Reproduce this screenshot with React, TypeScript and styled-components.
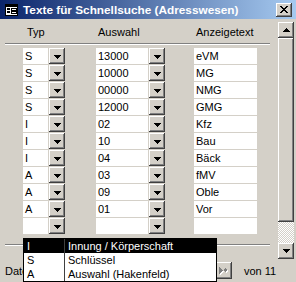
import React from 'react';
import styled, { createGlobalStyle } from 'styled-components';

const GlobalStyle = createGlobalStyle`
  html, body {
    margin: 0;
    padding: 0;
    background: #d4d0c8;
  }
  body {
    font-family: "Liberation Sans", Arial, sans-serif;
    font-size: 11px;
    overflow: hidden;
  }
`;

const Window = styled.div`
  position: relative;
  width: 296px;
  height: 282px;
  background: #d4d0c8;
  display: flex;
  flex-direction: column;
  overflow: hidden;
  color: #000;
`;

const TitleBar = styled.div`
  height: 19px;
  flex: none;
  display: flex;
  align-items: center;
  padding: 0 4px 0 5px;
  background: linear-gradient(to right, #0a246a, #a6caf0);
`;

const Title = styled.div`
  flex: 1;
  margin-left: 5px;
  color: #fff;
  font-weight: bold;
  font-size: 11.8px;
  white-space: nowrap;
`;

const raised = `
  background: #d4d0c8;
  box-shadow: inset -1px -1px #404040, inset 1px 1px #fff, inset -2px -2px #808080;
`;

const CloseButton = styled.div`
  ${raised}
  width: 16px;
  height: 14px;
  display: flex;
  align-items: center;
  justify-content: center;
`;

const Body = styled.div`
  flex: 1;
  display: flex;
  min-height: 0;
`;

const FormArea = styled.div`
  flex: 1;
  display: flex;
  flex-direction: column;
  padding: 0 8px 0 5px;
`;

const ColumnGrid = styled.div`
  display: grid;
  grid-template-columns: 73px 98px 61px;
  margin-left: 18px;
`;

const HeaderGrid = styled(ColumnGrid)`
  padding-top: 7px;
`;

const HeaderLabel = styled.div<{ $indent: number }>`
  line-height: 13px;
  padding-left: ${p => p.$indent}px;
`;

const Rule = styled.div<{ $gap: number }>`
  height: 0;
  margin-top: ${p => p.$gap}px;
  border-top: 1px solid #808080;
  border-bottom: 1px solid #fff;
`;

const RowsGrid = styled(ColumnGrid)`
  margin-top: 3px;
  grid-auto-rows: 16px;
  row-gap: 1px;
`;

const Combo = styled.div<{ $width: number }>`
  width: ${p => p.$width}px;
  display: flex;
  gap: 1px;
`;

const Field = styled.div<{ $width?: number }>`
  flex: 1;
  width: ${p => (p.$width ? `${p.$width}px` : 'auto')};
  background: #fff;
  padding-left: 2px;
  line-height: 16px;
  white-space: nowrap;
  overflow: hidden;
`;

const DropButton = styled.div`
  ${raised}
  width: 16px;
  height: 16px;
  display: flex;
  align-items: center;
  justify-content: center;
  padding-top: 2px;
  box-sizing: border-box;
`;

const ScrollBar = styled.div`
  width: 16px;
  margin: 3px 2px 0 0;
  height: 237px;
  display: flex;
  flex-direction: column;
`;

const ScrollButton = styled.div`
  ${raised}
  height: 16px;
  flex: none;
  display: flex;
  align-items: center;
  justify-content: center;
`;

const Thumb = styled.div`
  ${raised}
  height: 184px;
  flex: none;
`;

const Track = styled.div`
  flex: 1;
  background: repeating-conic-gradient(#d4d0c8 0% 25%, #fff 0% 50%) 0 0 / 2px 2px;
`;

const NavBar = styled.div`
  height: 23px;
  flex: none;
  display: flex;
  align-items: center;
  padding-left: 5px;
`;

const NavLabel = styled.div`
  width: 53px;
  white-space: nowrap;
`;

const NavButton = styled.div`
  ${raised}
  width: 16px;
  height: 17px;
  display: flex;
  align-items: center;
  justify-content: center;
`;

const RecordInput = styled.div`
  width: 94px;
  height: 17px;
  background: #fff;
  box-sizing: border-box;
  box-shadow: inset 1px 1px #808080, inset -1px -1px #fff;
  line-height: 17px;
  padding-left: 4px;
`;

const RecordCount = styled.div`
  margin-left: 12px;
  white-space: nowrap;
`;

const Popup = styled.div`
  position: absolute;
  left: 23px;
  top: 238px;
  width: 192px;
  border: 1px solid #000;
  background: #fff;
`;

const PopupRow = styled.div<{ $selected?: boolean }>`
  display: grid;
  grid-template-columns: 41px 1fr;
  height: 14px;
  line-height: 14px;
  background: ${p => (p.$selected ? '#000' : '#fff')};
  color: ${p => (p.$selected ? '#fff' : '#000')};
`;

const PopupCell = styled.div<{ $divider?: boolean }>`
  padding-left: 3px;
  white-space: nowrap;
  border-right: ${p => (p.$divider ? '1px solid #404040' : 'none')};
`;

const ArrowDown = () => (
  <svg width="7" height="4" viewBox="0 0 7 4" shapeRendering="crispEdges">
    <rect x="0" y="0" width="7" height="1" fill="#000" />
    <rect x="1" y="1" width="5" height="1" fill="#000" />
    <rect x="2" y="2" width="3" height="1" fill="#000" />
    <rect x="3" y="3" width="1" height="1" fill="#000" />
  </svg>
);

const ArrowUp = () => (
  <svg width="7" height="4" viewBox="0 0 7 4" shapeRendering="crispEdges">
    <rect x="3" y="0" width="1" height="1" fill="#000" />
    <rect x="2" y="1" width="3" height="1" fill="#000" />
    <rect x="1" y="2" width="5" height="1" fill="#000" />
    <rect x="0" y="3" width="7" height="1" fill="#000" />
  </svg>
);

const FormIcon = () => (
  <svg width="13" height="12" viewBox="0 0 13 12" shapeRendering="crispEdges">
    <rect x="0.5" y="0.5" width="12" height="11" fill="#fff" stroke="#000" />
    <rect x="1" y="1" width="11" height="2" fill="#000" />
    <rect x="2" y="4" width="3" height="2" fill="#000" />
    <rect x="6" y="4" width="5" height="2" fill="none" stroke="#000" strokeWidth="1" />
    <rect x="2" y="7" width="3" height="2" fill="#000" />
    <rect x="6" y="7" width="5" height="2" fill="none" stroke="#000" strokeWidth="1" />
  </svg>
);

const CloseGlyph = () => (
  <svg width="8" height="7" viewBox="0 0 8 7" shapeRendering="crispEdges">
    <path d="M0 0h2v1h1v1h2v-1h1v-1h2v1h-1v1h-1v1h-1v1h1v1h1v1h1v1h-2v-1h-1v-1h-2v1h-1v1h-2v-1h1v-1h1v-1h1v-1h-1v-1h-1v-1h-1z" fill="#000" />
  </svg>
);

const LastGlyph = () => (
  <svg width="8" height="7" viewBox="0 0 8 7" shapeRendering="crispEdges">
    <path d="M1 0v7l4-3.5z" fill="#000" />
    <rect x="6" y="0" width="1" height="7" fill="#000" />
  </svg>
);

const NewGlyph = () => (
  <svg width="12" height="8" viewBox="0 0 12 8" shapeRendering="crispEdges">
    <path d="M2 1v7l4-3.5z" fill="#fff" />
    <path d="M8 3h1M7 4h3M8 5h1M8 2v4M7 3l3 2M10 3l-3 2" stroke="#fff" strokeWidth="1" />
    <path d="M1 0v7l4-3.5z" fill="#808080" />
    <path d="M7 2h1M6 3h3M7 4h1M7 1v4M6 2l3 2M9 2l-3 2" stroke="#808080" strokeWidth="1" />
  </svg>
);

const rows = [
  { typ: 'S', auswahl: '13000', text: 'eVM' },
  { typ: 'S', auswahl: '10000', text: 'MG' },
  { typ: 'S', auswahl: '00000', text: 'NMG' },
  { typ: 'S', auswahl: '12000', text: 'GMG' },
  { typ: 'I', auswahl: '02', text: 'Kfz' },
  { typ: 'I', auswahl: '10', text: 'Bau' },
  { typ: 'I', auswahl: '04', text: 'Bäck' },
  { typ: 'A', auswahl: '03', text: 'fMV' },
  { typ: 'A', auswahl: '09', text: 'Oble' },
  { typ: 'A', auswahl: '01', text: 'Vor' },
  { typ: '', auswahl: '', text: '' },
];

const typOptions = [
  { code: 'I', label: 'Innung / Körperschaft' },
  { code: 'S', label: 'Schlüssel' },
  { code: 'A', label: 'Auswahl (Hakenfeld)' },
];

const App: React.FC = () => {
  return (
    <>
      <GlobalStyle />
      <Window>
        <TitleBar>
          <FormIcon />
          <Title>Texte für Schnellsuche (Adresswesen)</Title>
          <CloseButton>
            <CloseGlyph />
          </CloseButton>
        </TitleBar>
        <Body>
          <FormArea>
            <HeaderGrid>
              <HeaderLabel $indent={4}>Typ</HeaderLabel>
              <HeaderLabel $indent={2}>Auswahl</HeaderLabel>
              <HeaderLabel $indent={2}>Anzeigetext</HeaderLabel>
            </HeaderGrid>
            <Rule $gap={4} />
            <RowsGrid>
              {rows.map((r, i) => (
                <React.Fragment key={i}>
                  <Combo $width={42}>
                    <Field>{r.typ}</Field>
                    <DropButton>
                      <ArrowDown />
                    </DropButton>
                  </Combo>
                  <Combo $width={69}>
                    <Field>{r.auswahl}</Field>
                    <DropButton>
                      <ArrowDown />
                    </DropButton>
                  </Combo>
                  <Field $width={61}>{r.text}</Field>
                </React.Fragment>
              ))}
            </RowsGrid>
            <Rule $gap={10} />
          </FormArea>
          <ScrollBar>
            <ScrollButton>
              <ArrowUp />
            </ScrollButton>
            <Thumb />
            <Track />
            <ScrollButton>
              <ArrowDown />
            </ScrollButton>
          </ScrollBar>
        </Body>
        <NavBar>
          <NavLabel>Datensatz:</NavLabel>
          <NavButton />
          <NavButton />
          <RecordInput>1</RecordInput>
          <NavButton />
          <NavButton>
            <LastGlyph />
          </NavButton>
          <NavButton>
            <NewGlyph />
          </NavButton>
          <RecordCount>von 11</RecordCount>
        </NavBar>
        <Popup>
          {typOptions.map((o, i) => (
            <PopupRow key={o.code} $selected={i === 0}>
              <PopupCell $divider>{o.code}</PopupCell>
              <PopupCell>{o.label}</PopupCell>
            </PopupRow>
          ))}
        </Popup>
      </Window>
    </>
  );
};

export default App;
